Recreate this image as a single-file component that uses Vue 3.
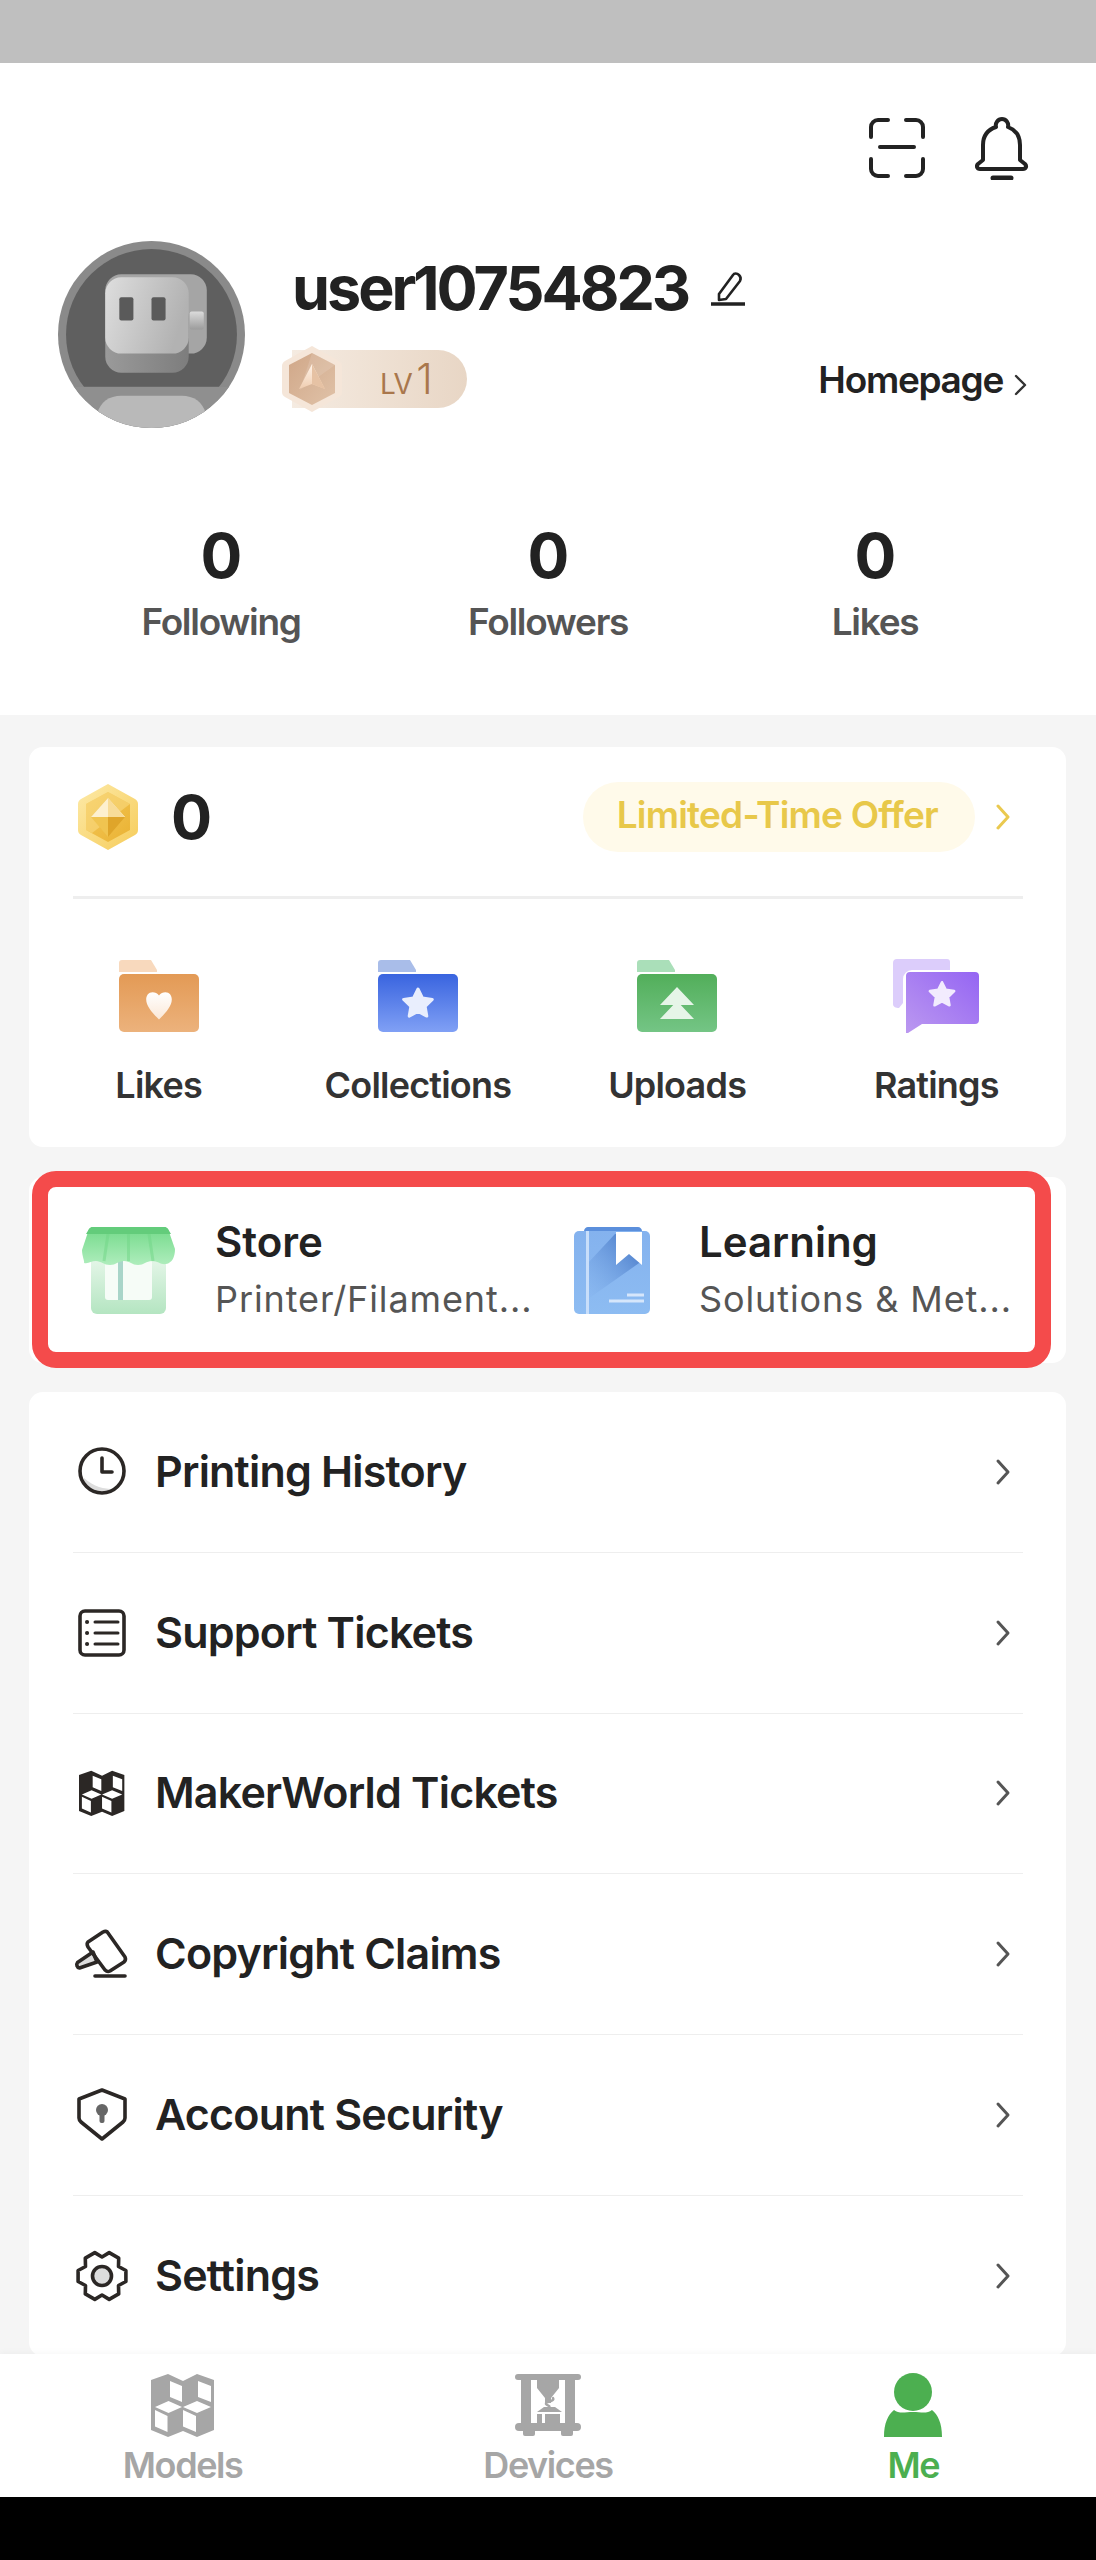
<template>
  <div class="screen">
    <div class="status-bar"></div>

    <div class="main">
      <header class="header">
        <div class="top-icons">
          <svg class="scan" width="56" height="60" viewBox="0 0 56 60" fill="none" stroke="#222" stroke-width="4" stroke-linecap="round">
            <path d="M2 19V9a7 7 0 0 1 7-7h10M37 2h10a7 7 0 0 1 7 7v10M2 41v10a7 7 0 0 0 7 7h10M37 58h10a7 7 0 0 0 7-7V41M11 29h34" />
          </svg>
          <svg width="54" height="64" viewBox="0 0 54 64" fill="none" stroke="#222" stroke-width="4" stroke-linecap="round" stroke-linejoin="round">
            <path d="M21 11c-1-4 2-8 6-8s7 4 6 8c8 3 12 9 12 18v15l5 4c2 2 1 5-2 5H5c-3 0-4-3-2-5l5-4V29c0-9 4-15 13-18z" />
            <path d="M18 62h18" stroke-width="5" />
          </svg>
        </div>

        <div class="profile">
          <svg class="avatar" width="187" height="187" viewBox="0 0 186 186">
            <defs>
              <clipPath id="avatarClip"><circle cx="93" cy="93" r="93" /></clipPath>
              <linearGradient id="faceGrad" x1="0" y1="0" x2="1" y2="0.3">
                <stop offset="0" stop-color="#dedede" />
                <stop offset="1" stop-color="#b2b2b2" />
              </linearGradient>
              <linearGradient id="lowGrad" x1="0" y1="0" x2="1" y2="0">
                <stop offset="0" stop-color="#9a9a9a" />
                <stop offset="1" stop-color="#7d7d7d" />
              </linearGradient>
              <linearGradient id="sideGrad" x1="0" y1="0" x2="0" y2="1">
                <stop offset="0" stop-color="#dcdcdc" />
                <stop offset="1" stop-color="#9c9c9c" />
              </linearGradient>
            </defs>
            <circle cx="93" cy="93" r="93" fill="#8a8a8a" />
            <circle cx="93" cy="93" r="85" fill="#5f5f5f" />
            <g clip-path="url(#avatarClip)">
              <rect x="0" y="145" width="186" height="41" fill="#8f8f8f" />
              <path d="M39 172c3-12 12-18 24-18h60c12 0 21 6 24 18v14H39z" fill="#b9b9b9" />
            </g>
            <rect x="47" y="33" width="101" height="79" rx="16" fill="#a5a5a5" />
            <rect x="47" y="60" width="83" height="71" rx="16" fill="url(#lowGrad)" />
            <rect x="47" y="36" width="83" height="76" rx="16" fill="url(#faceGrad)" />
            <rect x="61" y="56" width="14" height="23" rx="2" fill="#5a5a5a" />
            <rect x="93" y="56" width="14" height="23" rx="2" fill="#5a5a5a" />
            <rect x="131" y="70" width="14" height="18" rx="2" fill="url(#sideGrad)" />
          </svg>

          <div class="profile-info">
            <div class="name-row">
              <span class="name">user10754823</span>
              <svg width="36" height="36" viewBox="0 0 36 36" fill="none" stroke="#222" stroke-width="2.6" stroke-linejoin="round">
                <path d="M9 24 23 5c1-2 4-2 6 0s2 4 1 6L16 29l-7 1z" />
                <path d="M1 34h34" stroke-width="3.4" />
              </svg>
            </div>
            <div class="level-row">
              <div class="level-pill">
                <svg class="level-badge" width="60" height="66" viewBox="0 0 60 66">
                  <defs>
                    <linearGradient id="brz" x1="0" y1="0" x2="1" y2="1">
                      <stop offset="0" stop-color="#d0a788" />
                      <stop offset="1" stop-color="#e0c2a8" />
                    </linearGradient>
                    <linearGradient id="brzTip" x1="0" y1="0" x2="0" y2="1">
                      <stop offset="0" stop-color="#fff4ea" />
                      <stop offset="1" stop-color="#f0cdb0" />
                    </linearGradient>
                  </defs>
                  <path d="M30 0 57 15c2 1 3 3 3 5v26c0 2-1 4-3 5L30 66 3 51c-2-1-3-3-3-5V20c0-2 1-4 3-5z" fill="#f5e6d9" />
                  <path d="M30 7 53 19v28L30 59 7 47V19z" fill="url(#brz)" />
                  <path d="M30 7 53 19 18 44z" fill="#fff" opacity=".12" />
                  <path d="M30 18 43 43 30 38 17 43z" fill="url(#brzTip)" />
                  <path d="M30 18v20l13 5z" fill="#e6c2a4" />
                </svg>
                <span class="lv">LV</span><span class="lv-num">1</span>
              </div>
              <div class="homepage">
                <span>Homepage</span>
                <svg width="14" height="22" viewBox="0 0 14 22" fill="none" stroke="#333" stroke-width="2.4" stroke-linecap="round" stroke-linejoin="round">
                  <path d="M3 2l9 9-9 9" />
                </svg>
              </div>
            </div>
          </div>
        </div>

        <div class="stats">
          <div v-for="stat in stats" :key="stat" class="stat">
            <div class="stat-num">0</div>
            <div class="stat-label">{{ stat }}</div>
          </div>
        </div>
      </header>

      <section class="card points-card">
        <div class="points-row">
          <svg width="60" height="66" viewBox="0 0 60 66">
            <defs>
              <linearGradient id="coinOuter" x1="0" y1="0" x2="1" y2="1">
                <stop offset="0" stop-color="#fdeaa8" />
                <stop offset="1" stop-color="#f6cc5a" />
              </linearGradient>
              <linearGradient id="coinInner" x1="0" y1="0" x2="1" y2="1">
                <stop offset="0" stop-color="#f4c95a" />
                <stop offset="1" stop-color="#eab233" />
              </linearGradient>
            </defs>
            <path d="M30 0 57 15c2 1 3 3 3 5v26c0 2-1 4-3 5L30 66 3 51c-2-1-3-3-3-5V20c0-2 1-4 3-5z" fill="url(#coinOuter)" />
            <path d="M30 8 52 20v26L30 58 8 46V20z" fill="url(#coinInner)" />
            <path d="M30 8 52 20 14 49 8 46V20z" fill="#fbe08c" opacity=".5" />
            <path d="M30 14 47 33 30 53 13 33z" fill="#f0c450" />
            <path d="M30 14 13 33h34z" fill="#fdf0cf" />
            <path d="M30 14v19h17z" fill="#f8dc98" />
            <path d="M30 33v20l17-20z" fill="#dfa52a" />
          </svg>
          <span class="points-num">0</span>
          <span class="offer">Limited-Time Offer</span>
          <svg class="offer-arrow" width="16" height="26" viewBox="0 0 16 26" fill="none" stroke="#eac94f" stroke-width="3" stroke-linecap="round" stroke-linejoin="round">
            <path d="M3 2l10 11L3 24" />
          </svg>
        </div>
        <div class="points-line"></div>

        <div class="shortcuts">
          <div class="shortcut">
            <svg width="80" height="72" viewBox="0 0 80 72">
              <defs>
                <linearGradient id="fOrange" x1="0" y1="0" x2="0" y2="1">
                  <stop offset="0" stop-color="#e39a55" />
                  <stop offset="1" stop-color="#ecb27c" />
                </linearGradient>
                <linearGradient id="fWhiteO" x1="0" y1="0" x2="0" y2="1">
                  <stop offset="0" stop-color="#fff" />
                  <stop offset="1" stop-color="#fbe8d7" />
                </linearGradient>
              </defs>
              <path d="M0 3a3 3 0 0 1 3-3h29l6 10v2H0z" fill="#f8d9bd" />
              <rect y="14" width="80" height="58" rx="5" fill="url(#fOrange)" />
              <path d="M40 33c2-3 5-4 8-4 5 0 8 4 8 9 0 8-7 16-16 25-9-9-16-17-16-25 0-5 3-9 8-9 3 0 6 1 8 4z" transform="translate(8 9) scale(.8)" fill="url(#fWhiteO)" />
            </svg>
            <span>Likes</span>
          </div>
          <div class="shortcut">
            <svg width="80" height="72" viewBox="0 0 80 72">
              <defs>
                <linearGradient id="fBlue" x1="0" y1="0" x2="0" y2="1">
                  <stop offset="0" stop-color="#3964df" />
                  <stop offset="1" stop-color="#80a0f5" />
                </linearGradient>
              </defs>
              <path d="M0 3a3 3 0 0 1 3-3h29l6 10v2H0z" fill="#a9bde9" />
              <rect y="14" width="80" height="58" rx="5" fill="url(#fBlue)" />
              <path :d="starPath" transform="translate(40 44)" fill="#e9eefd" stroke="#e9eefd" stroke-width="3" stroke-linejoin="round" />
            </svg>
            <span>Collections</span>
          </div>
          <div class="shortcut">
            <svg width="80" height="72" viewBox="0 0 80 72">
              <defs>
                <linearGradient id="fGreen" x1="0" y1="0" x2="0" y2="1">
                  <stop offset="0" stop-color="#52ae5a" />
                  <stop offset="1" stop-color="#74c585" />
                </linearGradient>
              </defs>
              <path d="M0 3a3 3 0 0 1 3-3h29l6 10v2H0z" fill="#aadfb9" />
              <rect y="14" width="80" height="58" rx="5" fill="url(#fGreen)" />
              <path d="M40 27 57 45H23zM40 41 57 59H23z" fill="#e6f5e8" />
            </svg>
            <span>Uploads</span>
          </div>
          <div class="shortcut">
            <svg width="86" height="74" viewBox="0 0 86 74">
              <defs>
                <linearGradient id="fPurple" x1="1" y1="0" x2="0" y2="1">
                  <stop offset="0" stop-color="#9565f3" />
                  <stop offset="1" stop-color="#bb98f0" />
                </linearGradient>
              </defs>
              <path d="M4 0h50a3 3 0 0 1 3 3v8H19a9 9 0 0 0-9 9v24l-4 5c-3 0-6-1-6-4V4a4 4 0 0 1 4-4z" fill="#dccdfb" />
              <path d="M17 13h65a4 4 0 0 1 4 4v44a4 4 0 0 1-4 4H29L15 74H13V17a4 4 0 0 1 4-4z" fill="url(#fPurple)" />
              <path :d="starPath" transform="translate(49 36) scale(.85)" fill="#f2ebfe" stroke="#f2ebfe" stroke-width="3" stroke-linejoin="round" />
            </svg>
            <span>Ratings</span>
          </div>
        </div>
      </section>

      <section class="card service-card">
        <div class="service">
          <svg width="93" height="87" viewBox="0 0 93 87">
            <defs>
              <linearGradient id="shopBody" x1="0" y1="0" x2="0" y2="1">
                <stop offset="0" stop-color="#e8f7eb" />
                <stop offset="1" stop-color="#b4e5c1" />
              </linearGradient>
              <linearGradient id="shopRoof" x1="0" y1="0" x2="0" y2="1">
                <stop offset="0" stop-color="#74da8a" />
                <stop offset="1" stop-color="#aeedbc" />
              </linearGradient>
            </defs>
            <rect x="9" y="28" width="75" height="59" rx="6" fill="url(#shopBody)" />
            <path d="M23 32h47v38a3 3 0 0 1-3 3H26a3 3 0 0 1-3-3z" fill="#f6fcf7" />
            <rect x="36" y="34" width="5" height="39" fill="#a9d5c9" />
            <path d="M10 0h73c1 0 2 1 3 2l7 20c0 8-3 14-9 15-5 1-8-3-14-3s-8 4-14 4-8-4-14-4-8 4-14 4-9-4-14-4-7 3-12 2C3 35 0 29 0 23L7 2c1-1 2-2 3-2z" fill="url(#shopRoof)" />
            <path d="M10 0h73c1 0 2 1 3 2l3 5H4l3-5c1-1 2-2 3-2z" fill="#63cc7b" />
            <path d="M26 7l-4 27M46.500 7v27M67 7l4 27" stroke="#6fd585" stroke-width="3" stroke-opacity=".5" fill="none" />
          </svg>
          <div class="service-text">
            <div class="service-title">Store</div>
            <div class="service-sub">Printer/Filament...</div>
          </div>
        </div>
        <div class="service">
          <svg class="book" width="76" height="87" viewBox="0 0 76 87">
            <defs>
              <linearGradient id="bookBody" x1="0" y1="0" x2="0" y2="1">
                <stop offset="0" stop-color="#84b2ee" />
                <stop offset="1" stop-color="#8dbcf2" />
              </linearGradient>
              <linearGradient id="bookShade" x1="1" y1="0" x2="0" y2="1">
                <stop offset="0" stop-color="#3d6fc0" />
                <stop offset="1" stop-color="#86b4ee" stop-opacity=".2" />
              </linearGradient>
            </defs>
            <path d="M14 0h50c2 0 4 2 4 4H10c0-2 2-4 4-4z" fill="#5b8fdc" />
            <rect y="4" width="76" height="83" rx="5" fill="url(#bookBody)" />
            <path d="M41 7 14 36v36L68 34V7z" fill="url(#bookShade)" />
            <rect x="12" y="4" width="3" height="83" fill="#c8defa" />
            <path d="M42 5h26v33L55 27 42 38z" fill="#fff" />
            <path d="M53 68h17M35 74h35" stroke="#d6e6fb" stroke-width="3" fill="none" />
          </svg>
          <div class="service-text">
            <div class="service-title">Learning</div>
            <div class="service-sub">Solutions &amp; Met...</div>
          </div>
        </div>
        <div class="highlight"></div>
      </section>

      <section class="card menu-card">
        <div v-for="item in menu" :key="item.key" class="menu-row">
          <svg class="menu-icon" width="52" height="50" viewBox="0 0 52 50" fill="none" stroke="#2b2725" stroke-width="3.6" stroke-linecap="round" stroke-linejoin="round">
            <template v-if="item.key === 'history'">
              <path d="M8 36A22 22 0 0 0 26 46c5 0 9-2 12-4C28 42 18 40 8 31z" fill="#ddd" stroke="none" />
              <circle cx="26" cy="24" r="22" />
              <path d="M26 11v14h10" />
            </template>
            <template v-else-if="item.key === 'tickets'">
              <rect x="4" y="3" width="44" height="44" rx="5" />
              <path d="M19 14h23M19 25h23M19 36h23" stroke-width="3" />
              <path d="M11 14h.1M11 25h.1M11 36h.1" stroke-width="4" />
            </template>
            <template v-else-if="item.key === 'maker'">
              <g transform="translate(3 2) scale(.72)" stroke="none">
                <path :d="cubeOutline" fill="#2b2725" />
                <path :d="cubeWindows" fill="#fff" />
              </g>
            </template>
            <template v-else-if="item.key === 'copyright'">
              <path d="M17 23 1.500 33.500c-1.500 2-.5 5 2 5.500L21 33z" fill="#ddd" />
              <path d="M12 13 27 3c2-1 4-1 5 1l17 24c1 2 0 4-1 5L34 42c-2 1-4 0-5-1L12 18c-1-2-1-4 0-5z" />
              <path d="M19 47h30" />
            </template>
            <template v-else-if="item.key === 'security'">
              <path d="M26 0 49 9v19c0 2-1 3-2 4L26 49 5 32c-1-1-2-2-2-4V9z" />
              <circle cx="26" cy="20" r="6" fill="#666" stroke="none" />
              <rect x="23.500" y="21" width="5" height="12" rx="2" fill="#666" stroke="none" />
            </template>
            <template v-else>
              <path :d="gearPath" />
              <circle cx="26" cy="25" r="9.500" fill="#ddd" />
            </template>
          </svg>
          <span class="menu-label">{{ item.label }}</span>
          <svg class="menu-arrow" width="16" height="28" viewBox="0 0 16 28" fill="none" stroke="#555" stroke-width="3" stroke-linecap="round" stroke-linejoin="round">
            <path d="M3 3l10 11L3 25" />
          </svg>
        </div>
      </section>
    </div>

    <nav class="tabbar">
      <div class="tab">
        <svg width="64" height="64" viewBox="0 0 64 64">
          <path :d="cubeOutline" fill="#a6a6a6" />
          <path :d="cubeWindows" fill="#fff" />
        </svg>
        <span>Models</span>
      </div>
      <div class="tab">
        <svg width="66" height="62" viewBox="0 0 66 62" fill="#a6a6a6">
          <rect x="0" y="0" width="66" height="6" rx="3" />
          <rect x="6" y="0" width="10" height="55" />
          <rect x="50" y="0" width="10" height="55" />
          <rect x="0" y="49" width="66" height="8" rx="4" />
          <rect x="8" y="55" width="12" height="7" rx="2" />
          <rect x="46" y="55" width="12" height="7" rx="2" />
          <path d="M22 6h22v8l-8 10v5h-6v-5l-8-10z" />
          <path d="M38 24c2 4-8 3-7 6 1 2 5 1 3 5" fill="none" stroke="#a6a6a6" stroke-width="2.500" stroke-linecap="round" />
          <path d="M22 38l7-5h11l7 5z" />
          <rect x="22" y="40" width="5" height="10" />
          <rect x="30" y="40" width="15" height="10" />
        </svg>
        <span>Devices</span>
      </div>
      <div class="tab active">
        <svg width="58" height="64" viewBox="0 0 58 64" fill="#4caf50">
          <ellipse cx="29" cy="19" rx="19" ry="19" />
          <path d="M10 37c5 4 11 2 19 2s14 2 19-2c6 5 10 13 10 27H0c0-14 4-22 10-27z" />
        </svg>
        <span>Me</span>
      </div>
    </nav>

    <div class="nav-bar"></div>
  </div>
</template>

<script setup>
const stats = ["Following", "Followers", "Likes"];

const menu = [
  { key: "history", label: "Printing History" },
  { key: "tickets", label: "Support Tickets" },
  { key: "maker", label: "MakerWorld Tickets" },
  { key: "copyright", label: "Copyright Claims" },
  { key: "security", label: "Account Security" },
  { key: "settings", label: "Settings" },
];

// same cube shape is used by the tab bar and the MakerWorld row
const cubeOutline = "M17 1 32 8 46 1 63 7V57L46 64 32 58 17 64 0 57V7Z";
const cubeWindows =
  "M19 8 31 13V29L19 24ZM47 8 60 13V29L47 24ZM4 34 17.500 28 31 34 17.500 40ZM32 34 46 28 60 34 46 40ZM4 37 16.500 43V59L4 53.500ZM32 37 45 43V59L32 53.500Z";

const polar = (r, deg, cx = 0, cy = 0) => {
  const a = (deg * Math.PI) / 180;
  return `${(cx + r * Math.cos(a)).toFixed(1)} ${(cy + r * Math.sin(a)).toFixed(1)}`;
};

const makeStar = () => {
  const pts = [];
  for (let i = 0; i < 10; i++) {
    pts.push(polar(i % 2 ? 7.5 : 15, -90 + i * 36));
  }
  return `M${pts.join("L")}Z`;
};

const makeGear = () => {
  const pts = [];
  for (let i = 0; i < 6; i++) {
    const mid = i * 60;
    pts.push(polar(19, mid - 30, 26, 25));
    pts.push(polar(24.500, mid - 13, 26, 25));
    pts.push(polar(24.500, mid + 13, 26, 25));
  }
  return `M${pts.join("L")}Z`;
};

const starPath = makeStar();
const gearPath = makeGear();
</script>

<style>
html,
body {
  margin: 0;
  background: #000;
}
</style>

<style scoped>
.screen {
  width: 1096px;
  height: 2560px;
  display: flex;
  flex-direction: column;
  overflow: hidden;
  font-family: Inter, "Noto Sans", sans-serif;
  color: #222;
}

.status-bar {
  height: 63px;
  flex-shrink: 0;
  background: #bfbfbf;
}

.nav-bar {
  height: 63px;
  flex-shrink: 0;
  background: #000;
}

.main {
  flex: 1;
  min-height: 0;
  overflow: hidden;
  background: #f5f5f5;
  display: flex;
  flex-direction: column;
}

/* header */
.header {
  height: 652px;
  flex-shrink: 0;
  box-sizing: border-box;
  background: #fff;
  padding-top: 53px;
}

.top-icons {
  height: 64px;
  display: flex;
  justify-content: flex-end;
  align-items: center;
  gap: 50px;
  padding-right: 67px;
}

.profile {
  display: flex;
  margin-top: 61px;
  padding: 0 69px 0 58px;
  gap: 47px;
}

.avatar {
  flex-shrink: 0;
}

.profile-info {
  flex: 1;
  padding-top: 11px;
}

.name-row {
  display: flex;
  align-items: center;
  gap: 22px;
  height: 72px;
}

.name {
  font-size: 61px;
  font-weight: 700;
  letter-spacing: -3px;
  line-height: 72px;
}

.level-row {
  display: flex;
  justify-content: space-between;
  align-items: center;
  margin-top: 26px;
}

.level-pill {
  position: relative;
  width: 175px;
  height: 58px;
  box-sizing: border-box;
  padding-left: 88px;
  display: flex;
  align-items: baseline;
  border-radius: 0 29px 29px 0;
  background: linear-gradient(90deg, #f5ebe1, #e8d6c5);
  color: #a9774c;
  font-weight: 400;
  line-height: 58px;
}

.level-badge {
  position: absolute;
  left: -10px;
  top: -4px;
}

.lv {
  font-size: 28px;
  letter-spacing: -0.5px;
}

.lv-num {
  font-size: 42px;
  font-weight: 300;
  margin-left: 4px;
}

.homepage {
  display: flex;
  align-items: center;
  gap: 10px;
  font-size: 37px;
  font-weight: 600;
  letter-spacing: -1.3px;
}

.homepage svg {
  margin-top: 11px;
}

.stats {
  display: grid;
  grid-template-columns: repeat(3, 327px);
  justify-content: center;
  margin-top: 92px;
}

.stat {
  text-align: center;
}

.stat-num {
  font-size: 62px;
  font-weight: 700;
  letter-spacing: -1px;
  line-height: 72px;
}

.stat-label {
  margin-top: 7px;
  font-size: 37px;
  font-weight: 600;
  letter-spacing: -1.3px;
  line-height: 46px;
  color: #555;
}

/* cards */
.card {
  margin: 0 30px 0 29px;
  background: #fff;
  border-radius: 14px;
  flex-shrink: 0;
}

.points-card {
  margin-top: 32px;
  height: 400px;
}

.points-row {
  height: 149px;
  display: flex;
  align-items: center;
  padding: 0 55px 9px 49px;
  box-sizing: border-box;
}

.points-num {
  margin-left: 33px;
  font-size: 61px;
  font-weight: 700;
  letter-spacing: -1px;
}

.offer {
  margin-left: auto;
  height: 70px;
  box-sizing: border-box;
  padding: 0 37px 6px 34px;
  display: flex;
  align-items: center;
  border-radius: 35px;
  background: #fffaea;
  color: #e8c84a;
  font-size: 37px;
  font-weight: 600;
  letter-spacing: -0.8px;
}

.offer-arrow {
  margin-left: 20px;
}

.points-line {
  height: 3px;
  margin: 0 43px 0 44px;
  background: #eee;
}

.shortcuts {
  display: grid;
  grid-template-columns: repeat(4, 1fr);
  padding-top: 60px;
}

.shortcut {
  display: flex;
  flex-direction: column;
  align-items: center;
  font-size: 36px;
  font-weight: 600;
  letter-spacing: -0.8px;
  color: #333;
}

.shortcut svg {
  height: 74px;
}

.shortcut span {
  margin-top: 30px;
  line-height: 44px;
}

.service-card {
  position: relative;
  margin-top: 30px;
  height: 186px;
  display: flex;
  align-items: center;
  padding-left: 53px;
}

.service {
  width: 492px;
  display: flex;
  align-items: center;
}

.service svg {
  flex-shrink: 0;
}

.service-text {
  margin-left: 40px;
  margin-top: -3px;
}

.book + .service-text {
  margin-left: 49px;
}

.service-title {
  font-size: 42px;
  font-weight: 600;
  line-height: 52px;
}

.service-sub {
  margin-top: 9px;
  font-size: 36px;
  letter-spacing: 0.9px;
  line-height: 44px;
  color: #555;
  white-space: nowrap;
}

.highlight {
  position: absolute;
  left: 3px;
  right: 15px;
  top: -6px;
  bottom: -5px;
  border: 16px solid #f44b4b;
  border-radius: 24px;
}

.menu-card {
  margin-top: 29px;
}

.menu-row {
  height: 159.8px;
  display: flex;
  align-items: center;
  margin: 0 43px 0 44px;
  border-bottom: 1px solid #eee;
}

.menu-row:last-child {
  border-bottom: none;
}

.menu-icon {
  margin-left: 3px;
  overflow: visible;
  flex-shrink: 0;
}

.menu-label {
  margin-left: 27px;
  margin-top: -2px;
  font-size: 43px;
  font-weight: 600;
  letter-spacing: -0.8px;
}

.menu-arrow {
  margin-left: auto;
  margin-right: 12px;
}

/* tab bar */
.tabbar {
  height: 143px;
  flex-shrink: 0;
  background: #fff;
  display: grid;
  grid-template-columns: repeat(3, 1fr);
  box-shadow: 0 -2px 6px rgba(0, 0, 0, 0.03);
  position: relative;
}

.tab {
  display: flex;
  flex-direction: column;
  align-items: center;
  padding-top: 18px;
  font-size: 36px;
  font-weight: 600;
  letter-spacing: -1.4px;
  color: #a6a6a6;
}

.tab svg {
  height: 66px;
}

.tab span {
  margin-top: 6px;
  line-height: 42px;
}

.tab.active {
  color: #4caf50;
}
</style>
